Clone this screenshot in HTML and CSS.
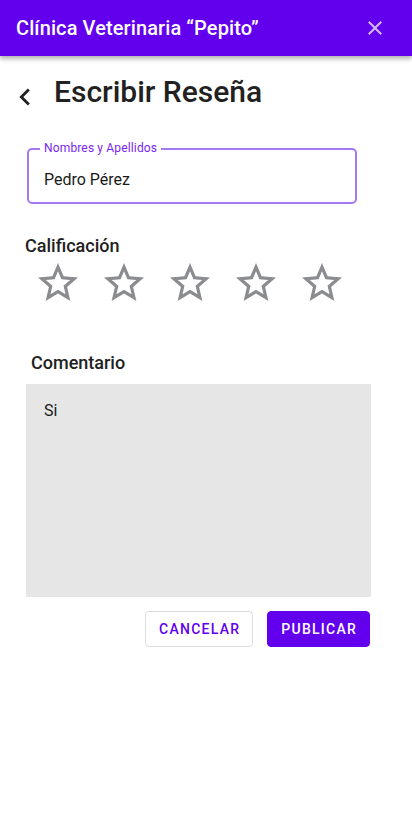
FILE: index.html
```html
<!DOCTYPE html>
<html lang="es">
<head>
<meta charset="utf-8">
<title>Escribir Reseña</title>
<link rel="stylesheet" href="styles.css">
</head>
<body>
<header class="appbar">
  <span class="appbar-title">Clínica Veterinaria “Pepito”</span>
  <svg class="close-icon" viewBox="0 0 24 24" width="24" height="24" aria-hidden="true"><path d="M19 6.41L17.59 5 12 10.59 6.41 5 5 6.41 10.59 12 5 17.59 6.41 19 12 13.41 17.59 19 19 17.59 13.41 12z"/></svg>
</header>

<main class="page">
  <div class="title-row">
    <svg class="back-icon" viewBox="0 0 24 24" width="34" height="34" aria-hidden="true"><path d="M15.41 7.41L14 6l-6 6 6 6 1.41-1.41L10.83 12z"/></svg>
    <h1 class="page-title">Escribir Reseña</h1>
  </div>

  <div class="field">
    <span class="field-label">Nombres y Apellidos</span>
    <div class="field-value">Pedro Pérez</div>
  </div>

  <h2 class="section-label rating-label">Calificación</h2>
  <div class="stars">
    <svg class="star" viewBox="0 0 24 24" width="48" height="48"><path d="M22 9.24l-7.19-.62L12 2 9.19 8.63 2 9.24l5.46 4.73L5.82 21 12 17.27 18.18 21l-1.63-7.03L22 9.24zM12 15.4l-3.76 2.27 1-4.28-3.32-2.88 4.38-.38L12 6.1l1.71 4.04 4.38.38-3.32 2.88 1 4.28L12 15.4z"/></svg>
    <svg class="star" viewBox="0 0 24 24" width="48" height="48"><path d="M22 9.24l-7.19-.62L12 2 9.19 8.63 2 9.24l5.46 4.73L5.82 21 12 17.27 18.18 21l-1.63-7.03L22 9.24zM12 15.4l-3.76 2.27 1-4.28-3.32-2.88 4.38-.38L12 6.1l1.71 4.04 4.38.38-3.32 2.88 1 4.28L12 15.4z"/></svg>
    <svg class="star" viewBox="0 0 24 24" width="48" height="48"><path d="M22 9.24l-7.19-.62L12 2 9.19 8.63 2 9.24l5.46 4.73L5.82 21 12 17.27 18.18 21l-1.63-7.03L22 9.24zM12 15.4l-3.76 2.27 1-4.28-3.32-2.88 4.38-.38L12 6.1l1.71 4.04 4.38.38-3.32 2.88 1 4.28L12 15.4z"/></svg>
    <svg class="star" viewBox="0 0 24 24" width="48" height="48"><path d="M22 9.24l-7.19-.62L12 2 9.19 8.63 2 9.24l5.46 4.73L5.82 21 12 17.27 18.18 21l-1.63-7.03L22 9.24zM12 15.4l-3.76 2.27 1-4.28-3.32-2.88 4.38-.38L12 6.1l1.71 4.04 4.38.38-3.32 2.88 1 4.28L12 15.4z"/></svg>
    <svg class="star" viewBox="0 0 24 24" width="48" height="48"><path d="M22 9.24l-7.19-.62L12 2 9.19 8.63 2 9.24l5.46 4.73L5.82 21 12 17.27 18.18 21l-1.63-7.03L22 9.24zM12 15.4l-3.76 2.27 1-4.28-3.32-2.88 4.38-.38L12 6.1l1.71 4.04 4.38.38-3.32 2.88 1 4.28L12 15.4z"/></svg>
  </div>

  <h2 class="section-label comment-label">Comentario</h2>
  <div class="comment-box">Si</div>

  <div class="actions">
    <button class="btn btn-outline" type="button">Cancelar</button>
    <button class="btn btn-primary" type="button">Publicar</button>
  </div>
</main>
</body>
</html>
```
FILE: styles.css
```css
* { box-sizing: border-box; }

html, body {
  margin: 0;
  padding: 0;
  background: #ffffff;
  font-family: Roboto, "Noto Sans", "Liberation Sans", sans-serif;
  color: #212121;
}

.appbar {
  position: relative;
  z-index: 2;
  height: 56px;
  background: #6200ee;
  display: flex;
  align-items: center;
  justify-content: space-between;
  padding: 0 25px 0 16px;
  box-shadow: 0 2px 4px rgba(0, 0, 0, 0.22), 0 4px 5px rgba(0, 0, 0, 0.12);
}

.appbar-title {
  color: #ffffff;
  font-size: 20px;
  font-weight: 500;
  line-height: 24px;
  letter-spacing: 0.1px;
}

.close-icon {
  fill: rgba(255, 255, 255, 0.72);
  display: block;
}

.page {
  padding: 18px 0 0 0;
}

.title-row {
  display: flex;
  align-items: flex-start;
  height: 36px;
}

.back-icon {
  display: block;
  flex: none;
  fill: #212121;
  margin: 5.5px 0 0 8px;
}

.page-title {
  margin: 0 0 0 12px;
  font-size: 30px;
  font-weight: 500;
  line-height: 36px;
  color: #212121;
}

.field {
  position: relative;
  margin: 38px 0 0 27px;
  width: 330px;
  height: 56px;
  border: 2px solid #a678f2;
  border-radius: 5px;
}

.field-label {
  position: absolute;
  left: 11px;
  top: -9px;
  padding: 0 4px;
  background: #ffffff;
  font-size: 12px;
  line-height: 14px;
  color: #7a26f2;
  letter-spacing: 0.15px;
}

.field-value {
  padding: 18px 15px 0 15px;
  font-size: 16px;
  line-height: 24px;
  color: #1a1a1a;
}

.section-label {
  margin: 0;
  font-size: 18px;
  font-weight: 500;
  line-height: 24px;
  color: #212121;
}

.rating-label {
  margin: 30px 0 0 25px;
}

.stars {
  display: flex;
  gap: 18px;
  margin: 1px 0 0 34px;
}

.star {
  display: block;
  fill: #8a8c8f;
}

.comment-label {
  margin: 44px 0 0 31px;
}

.comment-box {
  margin: 9px 0 0 26px;
  width: 345px;
  height: 213px;
  background: #e6e6e6;
  padding: 15px 18px;
  font-size: 16px;
  line-height: 24px;
  color: #1a1a1a;
}

.actions {
  display: flex;
  justify-content: flex-end;
  gap: 14px;
  width: 370px;
  margin: 14px 0 0 0;
}

.btn {
  height: 36px;
  border-radius: 4px;
  font-family: Roboto, "Noto Sans", sans-serif;
  font-size: 14px;
  font-weight: 500;
  letter-spacing: 1.25px;
  text-transform: uppercase;
  padding: 0 12px 0 13px;
  cursor: pointer;
}

.btn-outline {
  background: #ffffff;
  color: #6200ee;
  border: 1px solid #dcdcdc;
}

.btn-primary {
  background: #6200ee;
  color: #ffffff;
  border: 1px solid #6200ee;
}
```
